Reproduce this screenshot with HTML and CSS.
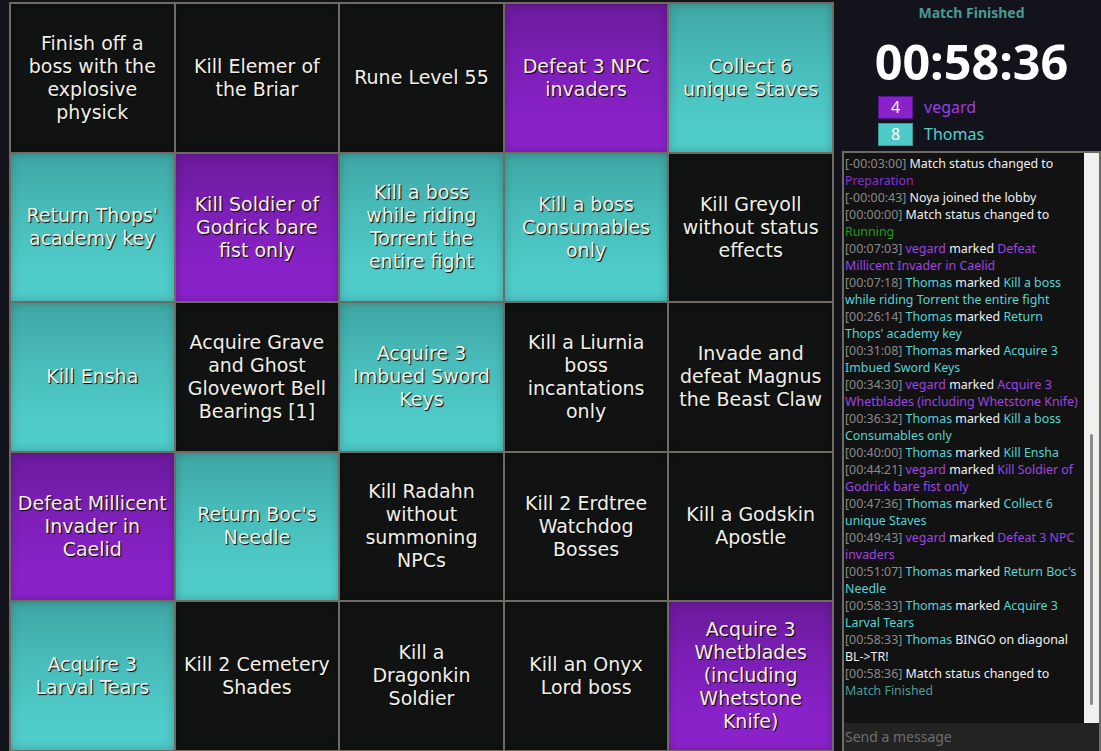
FILE: index.html
```html
<!DOCTYPE html>
<html>
<head>
<meta charset="utf-8">
<link rel="stylesheet" href="styles.css">
</head>
<body>
<div class="page">
  <div class="board">
    <div class="cell black"><span>Finish off a boss with the explosive physick</span></div>
    <div class="cell black"><span>Kill Elemer of the Briar</span></div>
    <div class="cell black"><span>Rune Level 55</span></div>
    <div class="cell purple"><span>Defeat 3 NPC invaders</span></div>
    <div class="cell teal"><span>Collect 6 unique Staves</span></div>

    <div class="cell teal"><span>Return Thops' academy key</span></div>
    <div class="cell purple"><span>Kill Soldier of Godrick bare fist only</span></div>
    <div class="cell teal"><span>Kill a boss while riding Torrent the entire fight</span></div>
    <div class="cell teal"><span>Kill a boss Consumables only</span></div>
    <div class="cell black"><span>Kill Greyoll without status effects</span></div>

    <div class="cell teal"><span>Kill Ensha</span></div>
    <div class="cell black"><span>Acquire Grave and Ghost Glovewort Bell Bearings [1]</span></div>
    <div class="cell teal"><span>Acquire 3 Imbued Sword Keys</span></div>
    <div class="cell black"><span>Kill a Liurnia boss incantations only</span></div>
    <div class="cell black"><span>Invade and defeat Magnus the Beast Claw</span></div>

    <div class="cell purple"><span>Defeat Millicent Invader in Caelid</span></div>
    <div class="cell teal"><span>Return Boc's Needle</span></div>
    <div class="cell black"><span>Kill Radahn without summoning NPCs</span></div>
    <div class="cell black"><span>Kill 2 Erdtree Watchdog Bosses</span></div>
    <div class="cell black"><span>Kill a Godskin Apostle</span></div>

    <div class="cell teal"><span>Acquire 3 Larval Tears</span></div>
    <div class="cell black"><span>Kill 2 Cemetery Shades</span></div>
    <div class="cell black"><span>Kill a<br>Dragonkin Soldier</span></div>
    <div class="cell black"><span>Kill an Onyx Lord boss</span></div>
    <div class="cell purple"><span>Acquire 3 Whetblades (including Whetstone Knife)</span></div>
  </div>

  <div class="panel">
    <div class="status">Match Finished</div>
    <div class="timer">00:58:36</div>
    <div class="scores">
      <div class="score"><div class="chip chip-purple">4</div><div class="name name-purple">vegard</div></div>
      <div class="score"><div class="chip chip-teal">8</div><div class="name name-teal">Thomas</div></div>
    </div>
    <div class="chat">
      <div class="log">
        <div class="messages">
          <div class="msg"><span class="ts">[-00:03:00]</span> Match status changed to <span class="prep">Preparation</span></div>
          <div class="msg"><span class="ts">[-00:00:43]</span> Noya joined the lobby</div>
          <div class="msg"><span class="ts">[00:00:00]</span> Match status changed to <span class="run">Running</span></div>
          <div class="msg"><span class="ts">[00:07:03]</span> <span class="pu">vegard</span> marked <span class="pu">Defeat Millicent Invader in Caelid</span></div>
          <div class="msg"><span class="ts">[00:07:18]</span> <span class="te">Thomas</span> marked <span class="te">Kill a boss while riding Torrent the entire fight</span></div>
          <div class="msg"><span class="ts">[00:26:14]</span> <span class="te">Thomas</span> marked <span class="te">Return Thops' academy key</span></div>
          <div class="msg"><span class="ts">[00:31:08]</span> <span class="te">Thomas</span> marked <span class="te">Acquire 3 Imbued Sword Keys</span></div>
          <div class="msg"><span class="ts">[00:34:30]</span> <span class="pu">vegard</span> marked <span class="pu">Acquire 3 Whetblades (including Whetstone Knife)</span></div>
          <div class="msg"><span class="ts">[00:36:32]</span> <span class="te">Thomas</span> marked <span class="te">Kill a boss Consumables only</span></div>
          <div class="msg"><span class="ts">[00:40:00]</span> <span class="te">Thomas</span> marked <span class="te">Kill Ensha</span></div>
          <div class="msg"><span class="ts">[00:44:21]</span> <span class="pu">vegard</span> marked <span class="pu">Kill Soldier of Godrick bare fist only</span></div>
          <div class="msg"><span class="ts">[00:47:36]</span> <span class="te">Thomas</span> marked <span class="te">Collect 6 unique Staves</span></div>
          <div class="msg"><span class="ts">[00:49:43]</span> <span class="pu">vegard</span> marked <span class="pu">Defeat 3 NPC invaders</span></div>
          <div class="msg"><span class="ts">[00:51:07]</span> <span class="te">Thomas</span> marked <span class="te">Return Boc's Needle</span></div>
          <div class="msg"><span class="ts">[00:58:33]</span> <span class="te">Thomas</span> marked <span class="te">Acquire 3 Larval Tears</span></div>
          <div class="msg"><span class="ts">[00:58:33]</span> <span class="te">Thomas</span> BINGO on diagonal BL-&gt;TR!</div>
          <div class="msg"><span class="ts">[00:58:36]</span> Match status changed to <span class="fin">Match Finished</span></div>
        </div>
        <div class="scrollbar"><div class="thumb"></div></div>
      </div>
      <input class="input" type="text" placeholder="Send a message">
    </div>
  </div>
</div>
</body>
</html>
```
FILE: styles.css
```css
html, body {
  margin: 0;
  padding: 0;
  background: #13131b;
  height: 100%;
  overflow: hidden;
}

.page {
  display: flex;
  height: 751px;
  overflow: hidden;
}

.board {
  margin-left: 9px;
  margin-top: 2px;
  width: 825px;
  flex: none;
  box-sizing: border-box;
  display: grid;
  grid-template-columns: repeat(5, 1fr);
  grid-auto-rows: 147.5px;
  gap: 2px;
  padding: 2px;
  background: #6f6a62;
  align-self: flex-start;
}

.cell {
  display: flex;
  align-items: center;
  justify-content: center;
  text-align: center;
  padding: 0;
  font-family: "DejaVu Sans", sans-serif;
  font-size: 19px;
  line-height: 23px;
  color: #f1efe6;
  text-shadow: 1px 1px 1px #000;
}

.cell span {
  max-width: 150px;
}

.cell.black {
  background: #111313;
  box-shadow: inset 0 0 10px rgba(0, 0, 0, 0.35);
}

.cell.teal {
  background: linear-gradient(to bottom, #3fa6a4 0%, #48bcba 40%, #4fcbc9 80%);
  box-shadow: inset 0 0 10px rgba(0, 0, 0, 0.22);
}

.cell.purple {
  background: linear-gradient(to bottom, #6b1a9c 0%, #7c1fb6 40%, #8a22c9 80%);
  box-shadow: inset 0 0 10px rgba(0, 0, 0, 0.22);
}

.panel {
  flex: 1;
  display: flex;
  flex-direction: column;
  padding-left: 8px;
  min-width: 0;
  height: 751px;
}

.status {
  margin-top: 4px;
  text-align: center;
  font-family: "Noto Sans", sans-serif;
  font-weight: bold;
  font-size: 14px;
  line-height: 18px;
  color: #4b9994;
}

.timer {
  margin-top: 16px;
  text-align: center;
  font-family: "Noto Sans", sans-serif;
  font-weight: bold;
  font-size: 48.5px;
  line-height: 47px;
  color: #ffffff;
}

.scores {
  margin-top: 11px;
  margin-left: 36px;
  display: flex;
  flex-direction: column;
  gap: 4px;
}

.score {
  display: flex;
  align-items: center;
  gap: 11px;
  height: 23px;
}

.chip {
  width: 35px;
  height: 23px;
  box-sizing: border-box;
  border: 1px solid;
  text-align: center;
  line-height: 21px;
  font-family: "Noto Sans", sans-serif;
  font-size: 16px;
  color: #ffffff;
}

.chip-purple {
  background: #8a22cc;
  border-color: #5b1390;
}

.chip-teal {
  background: #4ecac8;
  border-color: #3a9896;
}

.name {
  font-family: "Noto Sans", sans-serif;
  font-size: 16px;
  line-height: 23px;
}

.name-purple { color: #9c3fe2; }
.name-teal { color: #52d0d0; }

.chat {
  margin-top: 5px;
  flex: 1;
  min-height: 0;
  display: flex;
  flex-direction: column;
  border: 2px solid #6f6a62;
  border-bottom: none;
}

.log {
  flex: 1;
  min-height: 0;
  display: flex;
  background: #121212;
}

.messages {
  flex: 1;
  min-width: 0;
  padding: 2px 0 0 1px;
  overflow: hidden;
  font-family: "Noto Sans", sans-serif;
  font-size: 12.4px;
  line-height: 17px;
  color: #f0f0f0;
}

.ts { color: #8a8a8a; }
.pu { color: #a043e6; }
.te { color: #55d3d2; }
.prep { color: #8b2fd6; }
.run { color: #1c9c1c; }
.fin { color: #4a9c9a; }

.scrollbar {
  width: 15px;
  flex: none;
  background: #f0f0f0;
  display: flex;
  flex-direction: column;
  align-items: center;
}

.thumb {
  margin-top: 281px;
  width: 3px;
  height: 271px;
  border-radius: 2px;
  background: #8a8a8a;
}

.input {
  height: 28px;
  box-sizing: border-box;
  border: none;
  outline: none;
  margin: 0;
  padding: 0 1px 2px;
  background: #232323;
  font-family: "Noto Sans", sans-serif;
  font-size: 14px;
  color: #dddddd;
  width: 100%;
}

.input::placeholder {
  color: #6e6e6e;
}
```
